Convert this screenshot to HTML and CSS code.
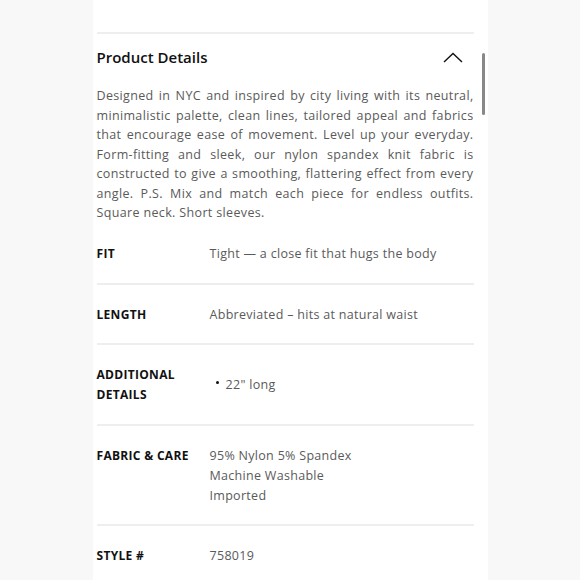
FILE: index.html
```html
<!DOCTYPE html>
<html lang="en">
<head>
<meta charset="utf-8">
<link rel="stylesheet" href="styles.css">
</head>
<body>
<div class="page">
  <div class="top-space"></div>
  <section class="details">
    <div class="details-head">
      <h2 class="details-title">Product Details</h2>
      <svg class="chevron" width="20" height="11" viewBox="0 0 20 11"><path d="M1 10 L10 1.5 L19 10" fill="none" stroke="#111" stroke-width="1.4"/></svg>
    </div>
    <p class="desc">Designed in NYC and inspired by city living with its neutral, minimalistic palette, clean lines, tailored appeal and fabrics that encourage ease of movement. Level up your everyday. Form-fitting and sleek, our nylon spandex knit fabric is constructed to give a smoothing, flattering effect from every angle. P.S. Mix and match each piece for endless outfits. Square neck. Short sleeves.</p>
    <div class="row first">
      <div class="label">FIT</div>
      <div class="value">Tight — a close fit that hugs the body</div>
    </div>
    <div class="row">
      <div class="label">LENGTH</div>
      <div class="value">Abbreviated – hits at natural waist</div>
    </div>
    <div class="row extra">
      <div class="label">ADDITIONAL DETAILS</div>
      <div class="value"><ul class="bullets"><li>22" long</li></ul></div>
    </div>
    <div class="row">
      <div class="label">FABRIC &amp; CARE</div>
      <div class="value">95% Nylon 5% Spandex<br>Machine Washable<br>Imported</div>
    </div>
    <div class="row">
      <div class="label">STYLE #</div>
      <div class="value">758019</div>
    </div>
  </section>
  <div class="scrollbar"></div>
</div>
</body>
</html>
```
FILE: styles.css
```css
html, body {
  margin: 0;
  padding: 0;
  background: #f8f8f8;
}
body {
  font-family: "Open Sans", "DejaVu Sans", sans-serif;
  color: #555;
}
.page {
  position: relative;
  width: 395px;
  height: 580px;
  margin: 0 auto;
  background: #fff;
  padding: 0 14px 0 4px;
  box-sizing: border-box;
  overflow: hidden;
}
.top-space {
  height: 32px;
}
.details {
  border-top: 2px solid #eeeeee;
}
.details-head {
  display: flex;
  align-items: center;
  justify-content: space-between;
  height: 46px;
}
.details-title {
  margin: 0;
  font-size: 15px;
  font-weight: 600;
  color: #111;
}
.chevron {
  display: block;
  margin-right: 11px;
  margin-top: 1px;
}
.desc {
  margin: 0;
  padding-top: 6px;
  font-size: 12.5px;
  line-height: 19.5px;
  letter-spacing: 0.35px;
  text-align: justify;
  color: #5a5a5a;
}
.row {
  display: flex;
  border-top: 2px solid #eeeeee;
  padding: 20px 0 18px;
  line-height: 20px;
}
.row.first {
  border-top: none;
  padding: 21px 0 19px;
}
.row.extra {
  padding-bottom: 19px;
}
.label {
  width: 113px;
  flex: none;
  font-size: 12px;
  font-weight: 700;
  letter-spacing: 0.3px;
  color: #111;
}
.value {
  font-size: 12.5px;
  letter-spacing: 0.3px;
  color: #5a5a5a;
}
.bullets {
  list-style: none;
  margin: 10px 0 0;
  padding: 0 0 0 6px;
}
.bullets li {
  display: flex;
  align-items: center;
  gap: 7px;
}
.bullets li::before {
  content: "";
  width: 3px;
  height: 3px;
  border-radius: 50%;
  background: #111;
  margin-top: -4px;
}
.scrollbar {
  position: absolute;
  left: 389px;
  top: 53px;
  width: 3px;
  height: 62px;
  border-radius: 2px;
  background: #888;
}
```
